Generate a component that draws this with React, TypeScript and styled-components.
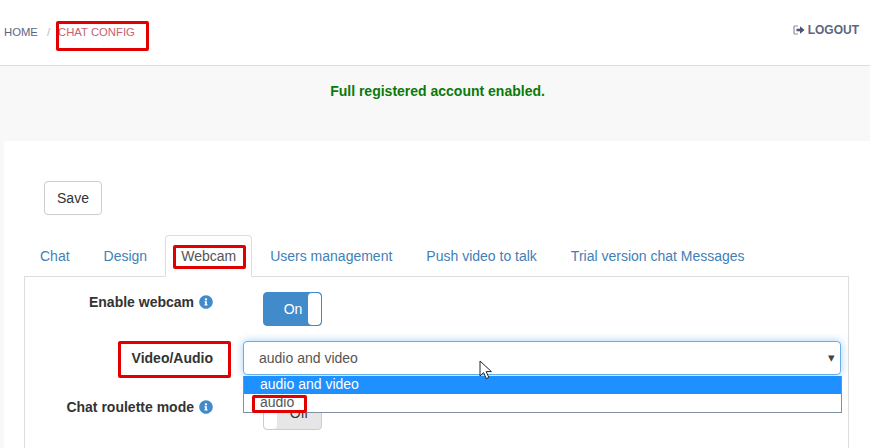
import styled, { createGlobalStyle } from "styled-components"
import { FaInfoCircle } from "react-icons/fa"

const GlobalStyle = createGlobalStyle`
    html, body {
        margin: 0;
        padding: 0;
        height: 448px;
        overflow: hidden;
        background: #f8f8f8;
        font-family: "Liberation Sans", Arial, sans-serif;
        font-size: 14px;
        color: #333;
    }
    * {
        box-sizing: border-box;
    }
`

const tabs = ["Chat", "Design", "Webcam", "Users management", "Push video to talk", "Trial version chat Messages"]

const InfoIcon = () => (
    <StyledInfo>
        <FaInfoCircle size={14} />
    </StyledInfo>
)

const LogoutIcon = () => (
    <svg width="12" height="10" viewBox="0 0 12 10" aria-hidden="true">
        <path d="M5 1H2Q1 1 1 2V8Q1 9 2 9H5" fill="none" stroke="#8a90a0" strokeWidth="1.2" />
        <path d="M3.5 3.7H7V1.2L11.6 5L7 8.8V6.3H3.5Z" fill="#4d5570" />
    </svg>
)

const Cursor = () => (
    <StyledCursor width="14" height="20" viewBox="0 0 14 20" aria-hidden="true">
        <path d="M1 1V16L4.6 12.6L7.2 18.6L9.8 17.4L7.2 11.6H12.4Z" fill="#fff" stroke="#1c2330" strokeWidth="1" />
    </StyledCursor>
)

export default function App() {
    return (
        <>
            <GlobalStyle />
            <StyledHeader>
                <StyledBreadcrumb>
                    <StyledHome>Home</StyledHome>
                    <StyledSlash>/</StyledSlash>
                    <StyledCurrent>
                        Chat Config
                        <StyledMark $left={-2} $top={-5} $width={93} $height={30} />
                    </StyledCurrent>
                </StyledBreadcrumb>
                <StyledLogout>
                    <LogoutIcon />
                    Logout
                </StyledLogout>
            </StyledHeader>

            <StyledNotice>Full registered account enabled.</StyledNotice>

            <StyledPanel>
                <StyledSave>Save</StyledSave>

                <StyledTabs>
                    {tabs.map((tab) => (
                        <StyledTab key={tab} $active={tab === "Webcam"}>
                            {tab}
                            {tab === "Webcam" && <StyledMark $left={7} $top={9} $width={73} $height={24} />}
                        </StyledTab>
                    ))}
                </StyledTabs>

                <StyledTabContent>
                    <StyledRow $after={15}>
                        <StyledLabel>
                            Enable webcam <InfoIcon />
                        </StyledLabel>
                        <StyledSwitch>
                            <StyledSwitchOn>On</StyledSwitchOn>
                            <StyledHandle />
                        </StyledSwitch>
                    </StyledRow>

                    <StyledRow $after={21}>
                        <StyledLabel>
                            <StyledMarkedText>
                                Video/Audio
                                <StyledMark $left={-14} $top={-9} $width={113} $height={37} />
                            </StyledMarkedText>
                        </StyledLabel>
                        <StyledSelectWrap>
                            <StyledSelect>
                                audio and video
                                <StyledArrow>▾</StyledArrow>
                            </StyledSelect>
                            <StyledOptions>
                                <StyledOption $selected>audio and video</StyledOption>
                                <StyledOption>
                                    audio
                                    <StyledMark $left={8} $top={1} $width={55} $height={18} />
                                </StyledOption>
                            </StyledOptions>
                            <Cursor />
                        </StyledSelectWrap>
                    </StyledRow>

                    <StyledRow $after={15}>
                        <StyledLabel $shift={1}>
                            Chat roulette mode <InfoIcon />
                        </StyledLabel>
                        <StyledSwitch $off>
                            <StyledHandle />
                            <StyledSwitchOff>Off</StyledSwitchOff>
                        </StyledSwitch>
                    </StyledRow>
                </StyledTabContent>
            </StyledPanel>
        </>
    )
}

const StyledHeader = styled.header`
    height: 66px;
    background: #fff;
    border-bottom: 1px solid #ddd;
    display: flex;
    justify-content: space-between;
    padding: 0 11px 0 4px;
`

const StyledBreadcrumb = styled.nav`
    display: flex;
    align-items: center;
    height: 64px;
    font-size: 11.3px;
    text-transform: uppercase;
`

const StyledHome = styled.a`
    color: #5d6680;
`

const StyledSlash = styled.span`
    color: #bbb;
    margin: 0 8px 0 9px;
`

const StyledCurrent = styled.span`
    position: relative;
    color: #c9616f;
`

const StyledMark = styled.span<{ $left: number; $top: number; $width: number; $height: number }>`
    position: absolute;
    left: ${(p) => p.$left}px;
    top: ${(p) => p.$top}px;
    width: ${(p) => p.$width}px;
    height: ${(p) => p.$height}px;
    border: 3px solid #e00000;
    border-radius: 2px;
    pointer-events: none;
    z-index: 3;
`

const StyledLogout = styled.a`
    display: flex;
    align-items: center;
    gap: 3px;
    height: 60px;
    font-size: 12px;
    font-weight: 700;
    text-transform: uppercase;
    color: #5d6680;
`

const StyledNotice = styled.div`
    height: 75px;
    padding-top: 17px;
    padding-left: 5px;
    font-weight: 700;
    line-height: 16px;
    text-align: center;
    color: #0a7a0a;
`

const StyledPanel = styled.main`
    margin-left: 4px;
    padding: 40px 21px 0 20px;
    height: 307px;
    overflow: hidden;
    background: #fff;
`

const StyledSave = styled.button`
    display: block;
    margin: 0 0 20px 20px;
    width: 58px;
    height: 34px;
    padding: 0;
    font: inherit;
    color: #333;
    background: #fff;
    border: 1px solid #ccc;
    border-radius: 4px;
`

const StyledTabs = styled.div`
    display: flex;
    gap: 2px;
    margin-bottom: -1px;
    position: relative;
    z-index: 1;
`

const StyledTab = styled.a<{ $active?: boolean }>`
    position: relative;
    padding: 10px 15px;
    line-height: 20px;
    height: 42px;
    border: 1px solid ${(p) => (p.$active ? "#ddd" : "transparent")};
    border-bottom-color: ${(p) => (p.$active ? "#fff" : "transparent")};
    border-radius: 4px 4px 0 0;
    background: ${(p) => (p.$active ? "#fff" : "transparent")};
    color: ${(p) => (p.$active ? "#555" : "#3f80b8")};
`

const StyledTabContent = styled.section`
    border: 1px solid #ddd;
    padding: 15px 0;
    height: 180px;
`

const StyledRow = styled.div<{ $after: number }>`
    display: grid;
    grid-template-columns: 188px 1fr;
    column-gap: 30px;
    padding-right: 7px;
    margin-bottom: ${(p) => p.$after}px;
`

const StyledLabel = styled.label<{ $shift?: number }>`
    display: flex;
    justify-content: flex-end;
    align-items: center;
    gap: 5px;
    align-self: start;
    height: 20px;
    margin-top: ${(p) => p.$shift ?? 0}px;
    font-weight: 700;
    color: #333;
`

const StyledMarkedText = styled.span`
    position: relative;
    top: 7px;
`

const StyledInfo = styled.span`
    display: inline-flex;
    color: #428bca;
`

const StyledSwitch = styled.div<{ $off?: boolean }>`
    display: flex;
    width: 59px;
    height: 34px;
    margin-left: 20px;
    border: 1px solid ${(p) => (p.$off ? "#ccc" : "#428bca")};
    border-radius: 4px;
    overflow: hidden;
    background: ${(p) => (p.$off ? "#e6e6e6" : "#428bca")};
`

const StyledSwitchOn = styled.span`
    flex: 1;
    padding-left: 14px;
    color: #fff;
    line-height: 32px;
    text-align: center;
`

const StyledSwitchOff = styled.span`
    flex: 1;
    color: #333;
    line-height: 32px;
    text-align: center;
`

const StyledHandle = styled.span`
    width: 13px;
    background: #fff;
    border-radius: 4px;
`

const StyledSelectWrap = styled.div`
    position: relative;
`

const StyledSelect = styled.div`
    position: relative;
    height: 34px;
    padding: 0 15px;
    line-height: 32px;
    color: #555;
    background: #fff;
    border: 1px solid #66afe9;
    border-radius: 4px;
    box-shadow: 0 0 8px rgba(102, 175, 233, 0.6);
`

const StyledArrow = styled.span`
    position: absolute;
    right: 5px;
    top: 0;
    font-size: 13px;
    color: #444;
`

const StyledOptions = styled.div`
    position: absolute;
    left: 0;
    top: 35px;
    width: 599px;
    border: 1px solid #7f8fa6;
    border-top: 0;
    background: #fff;
    z-index: 2;
`

const StyledOption = styled.div<{ $selected?: boolean }>`
    position: relative;
    height: 18px;
    padding-left: 16px;
    line-height: 16px;
    color: ${(p) => (p.$selected ? "#fff" : "#555")};
    background: ${(p) => (p.$selected ? "#1e90ff" : "#fff")};
`

const StyledCursor = styled.svg`
    position: absolute;
    left: 236px;
    top: 19px;
    z-index: 3;
`
